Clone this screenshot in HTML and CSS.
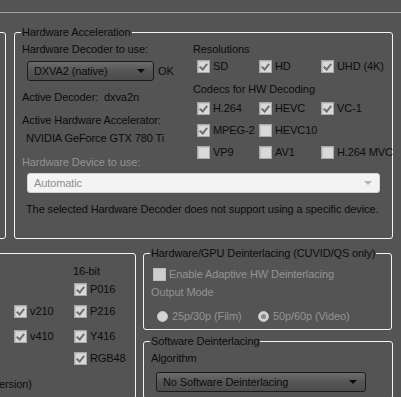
FILE: index.html
```html
<!DOCTYPE html>
<html lang="en">
<head>
    <meta charset="UTF-8">
    <title>Video Settings</title>
    <link rel="stylesheet" href="styles.css">
</head>
<body>
    <div class="tab-line"></div>

    <div class="row row-top">
        <fieldset class="group stub stub-top"></fieldset>

        <fieldset class="group hwaccel">
            <legend>Hardware Acceleration</legend>
            <div class="hw-cols">
                <div class="hw-left">
                    <div class="line">Hardware Decoder to use:</div>
                    <div class="combo-row">
                        <div class="combo combo-decoder">DXVA2 (native)<span class="arrow"></span></div>
                        <span class="ok">OK</span>
                    </div>
                    <div class="line gap10">Active Decoder:&nbsp;&nbsp;dxva2n</div>
                    <div class="line gap10">Active Hardware Accelerator:</div>
                    <div class="line gap5 indent">NVIDIA GeForce GTX 780 Ti</div>
                </div>
                <div class="hw-right">
                    <div class="line">Resolutions</div>
                    <div class="checks gap4">
                        <label class="check"><span class="cb on"></span>SD</label>
                        <label class="check"><span class="cb on"></span>HD</label>
                        <label class="check"><span class="cb on"></span>UHD (4K)</label>
                    </div>
                    <div class="line gap10">Codecs for HW Decoding</div>
                    <div class="checks gap6">
                        <label class="check"><span class="cb on"></span>H.264</label>
                        <label class="check"><span class="cb on"></span>HEVC</label>
                        <label class="check"><span class="cb on"></span>VC-1</label>
                    </div>
                    <div class="checks gap9">
                        <label class="check"><span class="cb on"></span>MPEG-2</label>
                        <label class="check"><span class="cb"></span>HEVC10</label>
                    </div>
                    <div class="checks gap9">
                        <label class="check"><span class="cb"></span>VP9</label>
                        <label class="check"><span class="cb"></span>AV1</label>
                        <label class="check"><span class="cb"></span>H.264 MVC</label>
                    </div>
                </div>
            </div>
            <div class="line disabled">Hardware Device to use:</div>
            <div class="combo combo-device">Automatic<span class="arrow"></span></div>
            <div class="line gap10 indent">The selected Hardware Decoder does not support using a specific device.</div>
        </fieldset>
    </div>

    <div class="row row-bottom">
        <fieldset class="group stub stub-bottom">
            <div class="formats">
                <span></span>
                <div class="line">16-bit</div>

                <span></span>
                <label class="check"><span class="cb on"></span>P016</label>

                <label class="check f-left"><span class="cb on"></span>v210</label>
                <label class="check"><span class="cb on"></span>P216</label>

                <label class="check f-left f-gap"><span class="cb on"></span>v410</label>
                <label class="check f-gap"><span class="cb on"></span>Y416</label>

                <span></span>
                <label class="check"><span class="cb on"></span>RGB48</label>
            </div>
            <div class="line cut">ersion)</div>
        </fieldset>

        <div class="right-col">
            <fieldset class="group hwdeint">
                <legend>Hardware/GPU Deinterlacing (CUVID/QS only)</legend>
                <label class="check disabled adaptive"><span class="cb off"></span>Enable Adaptive HW Deinterlacing</label>
                <div class="line disabled gap5">Output Mode</div>
                <div class="radios">
                    <label class="radio disabled"><span class="rb"></span>25p/30p (Film)</label>
                    <label class="radio disabled"><span class="rb sel"></span>50p/60p (Video)</label>
                </div>
            </fieldset>

            <fieldset class="group swdeint">
                <legend>Software Deinterlacing</legend>
                <div class="line gap4">Algorithm</div>
                <div class="combo combo-algo">No Software Deinterlacing<span class="arrow"></span></div>
            </fieldset>
        </div>
    </div>
</body>
</html>
```

FILE: styles.css
```css
body {
    margin: 0;
    width: 401px;
    height: 397px;
    overflow: hidden;
    background-color: #545454;
    color: #0c0c0c;
    font-family: "Liberation Sans", Arial, sans-serif;
    font-size: 11px;
    line-height: 13px;
    letter-spacing: -0.1px;
}
.tab-line {
    height: 12px;
    border-bottom: 1px solid #a3a3a3;
}

/* group boxes */
.group {
    box-sizing: border-box;
    margin: 0;
    padding: 0;
    border: 1px solid #f4f4f4;
    border-radius: 3px;
    min-width: 0;
}
.group legend {
    margin-left: -1px;
    padding: 0 1px;
    line-height: 13px;
}

.row {
    display: flex;
    align-items: flex-start;
}
.row-top {
    margin-top: 13px;
    gap: 8px;
}
.stub {
    margin-left: -100px;
}
.stub-top {
    width: 106px;
    height: 207px;
    margin-top: 6px;
}
.hwaccel {
    width: 379px;
    height: 213px;
    padding: 4px 0 0 7px;
}

.line {
    height: 13px;
    white-space: nowrap;
}
.gap4 { margin-top: 4px; }
.gap5 { margin-top: 5px; }
.gap6 { margin-top: 6px; }
.gap9 { margin-top: 9px; }
.gap10 { margin-top: 10px; }
.indent { padding-left: 4px; }
.disabled { color: #939393; }

.hw-cols {
    display: grid;
    grid-template-columns: 171px 1fr;
    height: 113px;
}

/* combo boxes */
.combo {
    box-sizing: border-box;
    position: relative;
    height: 20px;
    padding: 0 0 0 6px;
    line-height: 18px;
    border: 1px solid #1b1b1b;
    border-radius: 3px;
    background: linear-gradient(#6c6c6c, #555 50%, #4b4b4b);
    white-space: nowrap;
}
.combo .arrow {
    position: absolute;
    right: 8px;
    top: 7px;
    border-left: 4px solid transparent;
    border-right: 4px solid transparent;
    border-top: 4px solid #0c0c0c;
}
.combo-row {
    display: flex;
    align-items: center;
    margin: 5px 0 0 5px;
}
.combo-decoder {
    width: 127px;
}
.ok {
    margin-left: 4px;
}
.combo-device {
    width: 353px;
    margin: 4px 0 0 5px;
    background: #f3f3f3;
    border-color: #d2d2d2;
    color: #8e8e8e;
}
.combo-device .arrow {
    border-top-color: #b4b4b4;
    right: 7px;
}
.combo-algo {
    width: 210px;
    margin: 7px 0 0 5px;
}

/* checkboxes */
.checks {
    display: grid;
    grid-template-columns: 62px 62px auto;
    padding-left: 4px;
}
.check,
.radio {
    display: flex;
    align-items: center;
    height: 13px;
    white-space: nowrap;
}
.cb {
    box-sizing: border-box;
    position: relative;
    flex: none;
    width: 13px;
    height: 13px;
    margin-right: 3px;
    background: #d9d9d9;
    border: 1px solid #a8a8a8;
    box-shadow: inset 1px 1px 0 #c4c4c4;
}
.cb.on::after {
    content: "";
    position: absolute;
    left: 3px;
    top: 1px;
    width: 3px;
    height: 6px;
    border-right: 2px solid #6f6f6f;
    border-bottom: 2px solid #6f6f6f;
    transform: rotate(40deg);
}
.cb.off {
    background: #cdcdcd;
    border-color: #bdbdbd;
    box-shadow: none;
}

/* radios */
.radios {
    display: flex;
    margin: 11px 0 0 6px;
}
.radio {
    width: 101px;
}
.rb {
    box-sizing: border-box;
    position: relative;
    flex: none;
    width: 11px;
    height: 11px;
    margin-right: 4px;
    border-radius: 50%;
    background: #d3d3d3;
    border: 1px solid #c3c3c3;
}
.rb.sel::after {
    content: "";
    position: absolute;
    left: 2px;
    top: 2px;
    width: 5px;
    height: 5px;
    border-radius: 50%;
    background: #8a8a8a;
}

/* bottom row */
.row-bottom {
    margin-top: 8px;
    gap: 7px;
}
.stub-bottom {
    width: 236px;
    height: 146px;
    margin-top: 6px;
    padding: 11px 0 0 99px;
}
.formats {
    display: grid;
    grid-template-columns: 73px auto;
    row-gap: 9px;
}
.formats .line {
    margin-bottom: -4px;
}
.formats .check:not(.f-left) {
    margin-left: 1px;
}
.f-left {
    padding-left: 14px;
}
.f-gap {
    margin-top: 3px;
}
.cut {
    margin: 13px 0 0 -1px;
}

.right-col {
    display: flex;
    flex-direction: column;
    width: 250px;
}
.hwdeint {
    width: 249px;
    height: 83px;
    padding: 8px 0 0 7px;
}
.adaptive {
    padding-left: 2px;
}
.swdeint {
    width: 250px;
    height: 64px;
    margin-top: 5px;
    padding: 0 0 0 7px;
}
```
